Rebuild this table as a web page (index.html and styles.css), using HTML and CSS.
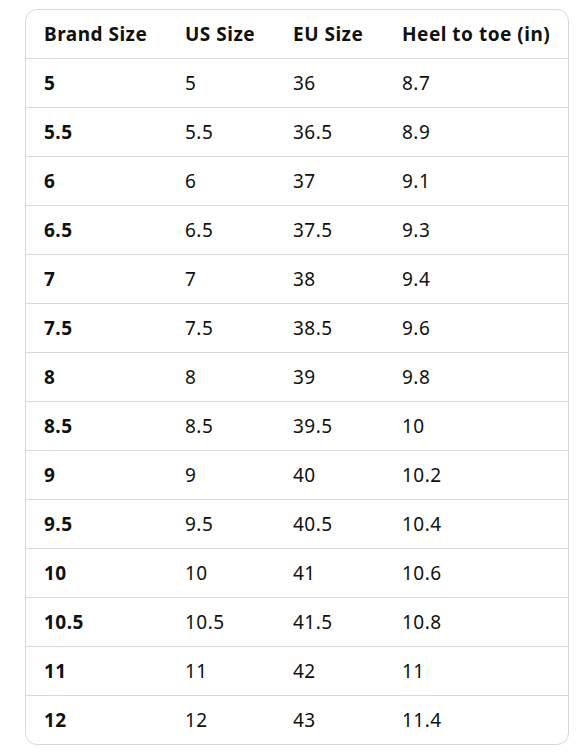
FILE: index.html
```html
<!DOCTYPE html>
<html>
<head>
<meta charset="utf-8">
<link rel="stylesheet" href="styles.css">
</head>
<body>
<div class="wrap">
<table class="sizes">
<thead>
<tr><th class="c1">Brand Size</th><th class="c2">US Size</th><th class="c3">EU Size</th><th class="c4">Heel to toe (in)</th></tr>
</thead>
<tbody>
<tr><th>5</th><td>5</td><td>36</td><td>8.7</td></tr>
<tr><th>5.5</th><td>5.5</td><td>36.5</td><td>8.9</td></tr>
<tr><th>6</th><td>6</td><td>37</td><td>9.1</td></tr>
<tr><th>6.5</th><td>6.5</td><td>37.5</td><td>9.3</td></tr>
<tr><th>7</th><td>7</td><td>38</td><td>9.4</td></tr>
<tr><th>7.5</th><td>7.5</td><td>38.5</td><td>9.6</td></tr>
<tr><th>8</th><td>8</td><td>39</td><td>9.8</td></tr>
<tr><th>8.5</th><td>8.5</td><td>39.5</td><td>10</td></tr>
<tr><th>9</th><td>9</td><td>40</td><td>10.2</td></tr>
<tr><th>9.5</th><td>9.5</td><td>40.5</td><td>10.4</td></tr>
<tr><th>10</th><td>10</td><td>41</td><td>10.6</td></tr>
<tr><th>10.5</th><td>10.5</td><td>41.5</td><td>10.8</td></tr>
<tr><th>11</th><td>11</td><td>42</td><td>11</td></tr>
<tr><th>12</th><td>12</td><td>43</td><td>11.4</td></tr>
</tbody>
</table>
</div>
</body>
</html>
```
FILE: styles.css
```css
html, body {
  margin: 0;
  padding: 0;
  background: #ffffff;
}
body {
  font-family: "Noto Sans", "Open Sans", Arial, sans-serif;
  color: #0f1111;
}
.wrap {
  padding: 9px 13px 0 25px;
}
.sizes {
  width: 544px;
  border-collapse: separate;
  border-spacing: 0;
  border: 1px solid #d5d9d9;
  border-radius: 12px;
  table-layout: fixed;
}
.sizes th,
.sizes td {
  box-sizing: border-box;
  height: 49px;
  padding: 0 0 0 18px;
  text-align: left;
  vertical-align: middle;
  font-size: 19px;
  letter-spacing: 0.5px;
  line-height: 24px;
  white-space: nowrap;
  border-top: 1px solid #d5d9d9;
}
.sizes th { font-weight: 700; }
.sizes td { font-weight: 400; }
.sizes thead th {
  border-top: none;
  height: 48px;
}
.c1 { width: 141px; }
.c2 { width: 108px; }
.c3 { width: 109px; }
```
